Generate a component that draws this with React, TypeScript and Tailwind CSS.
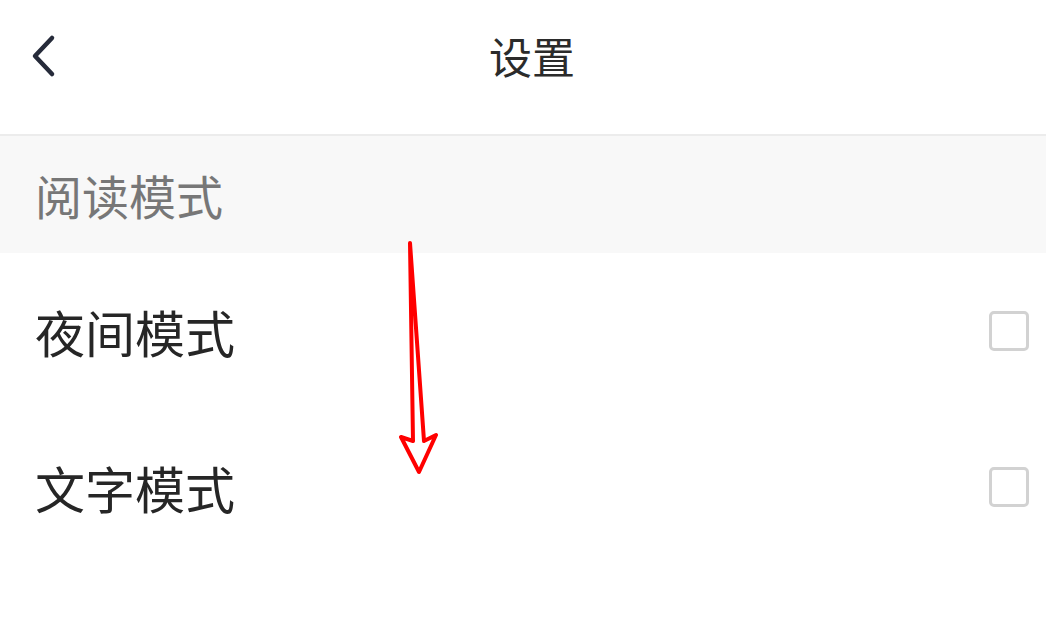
import { useState } from "react";

const font = { fontFamily: '"Noto Sans CJK SC", "Noto Sans", sans-serif' };

function Checkbox({ checked, onChange }: { checked: boolean; onChange: () => void }) {
  return (
    <button
      onClick={onChange}
      className={`w-[40px] h-[40px] rounded-[5px] border-[3px] shrink-0 ${
        checked ? "border-[#3b82f6] bg-[#3b82f6]" : "border-[#d2d2d2] bg-white"
      }`}
    />
  );
}

export default function App() {
  const [night, setNight] = useState(false);
  const [textMode, setTextMode] = useState(false);

  const rows = [
    { label: "夜间模式", checked: night, toggle: () => setNight((v) => !v) },
    { label: "文字模式", checked: textMode, toggle: () => setTextMode((v) => !v) },
  ];

  return (
    <div className="relative w-[1046px] h-[618px] bg-white overflow-hidden" style={font}>
      {/* header */}
      <div className="h-[136px] border-b-2 border-[#ececec] grid grid-cols-[1fr_auto_1fr] items-center pb-[20px]">
        <div className="pl-[30px] flex items-center">
          <svg width="30" height="48" viewBox="0 0 30 48" className="text-[#262b3a]">
            <path
              d="M22 5 L5 23 L22 41"
              fill="none"
              stroke="currentColor"
              strokeWidth="4.5"
              strokeLinecap="round"
              strokeLinejoin="round"
            />
          </svg>
        </div>
        <div className="text-[43px] leading-none text-[#2b2b2b] pl-[18px] pb-[4px]">设置</div>
        <div />
      </div>

      {/* section header */}
      <div className="h-[117px] bg-[#f8f8f8] flex items-center pl-[35px] text-[47px] text-[#777777] leading-none">
        阅读模式
      </div>

      {/* rows */}
      <div className="flex flex-col">
        {rows.map((r) => (
          <div key={r.label} className="h-[156px] flex items-center justify-between pl-[35px] pr-[17px]">
            <span className="text-[50px] leading-none text-[#262626]">{r.label}</span>
            <Checkbox checked={r.checked} onChange={r.toggle} />
          </div>
        ))}
      </div>

      {/* annotation arrow */}
      <svg className="absolute left-0 top-0 pointer-events-none" width="1046" height="618">
        <polygon
          points="410,243 424,441 436,435 419,472 401,437 413,441"
          fill="white"
          stroke="#ff0000"
          strokeWidth="4"
          strokeLinejoin="round"
        />
      </svg>
    </div>
  );
}
